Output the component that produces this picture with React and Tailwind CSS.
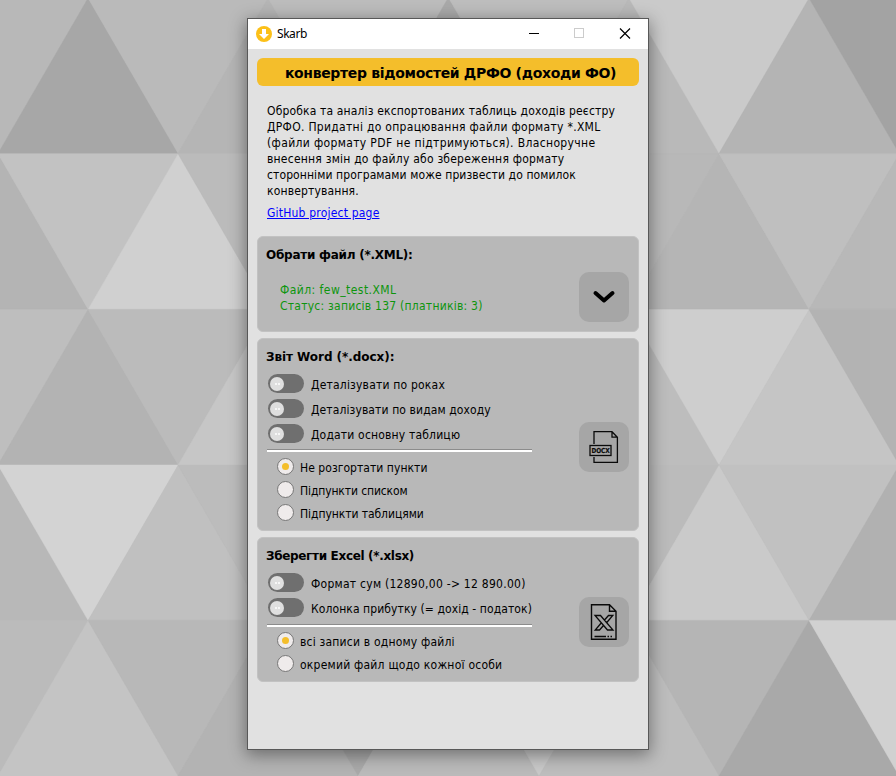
import React from "react";

const H = 155.6;
const UP = (x, y, c) => ({ p: `${x},${y + H} ${x + 90.2},${y} ${x + 180.4},${y + H}`, c });
const DOWN = (x, y, c) => ({ p: `${x},${y} ${x + 180.4},${y} ${x + 90.2},${y + H}`, c });

const TRIANGLES = [
  // row 1
  DOWN(-92, -2, "#b8b8b8"), UP(-2, -2, "#a7a7a7"), DOWN(88, -2, "#bababa"), UP(178, -2, "#b5b5b5"),
  DOWN(268, -2, "#bcbcbc"), UP(358, -2, "#a9a9a9"), DOWN(449, -2, "#bdbdbd"), UP(539, -2, "#b9b9b9"),
  DOWN(629, -2, "#cacaca"), UP(719, -2, "#b4b4b4"), DOWN(809, -2, "#a3a3a3"),
  // row 2
  UP(-92, 153.8, "#b4b4b4"), DOWN(-2, 153.8, "#c2c2c2"), UP(88, 153.8, "#d0d0d0"), DOWN(178, 153.8, "#bbbbbb"),
  DOWN(539, 153.8, "#b8b8b8"), UP(629, 153.8, "#b5b5b5"), DOWN(719, 153.8, "#bfbfbf"), UP(809, 153.8, "#b8b8b8"),
  // row 3
  DOWN(-92, 309.4, "#bebebe"), UP(-2, 309.4, "#b3b3b3"), DOWN(88, 309.4, "#bbbbbb"), UP(178, 309.4, "#c6c6c6"),
  UP(539, 309.4, "#bdbdbd"), DOWN(629, 309.4, "#cecece"), UP(719, 309.4, "#c5c5c5"), DOWN(809, 309.4, "#b3b3b3"),
  // row 4
  UP(-92, 465, "#b8b8b8"), DOWN(-2, 465, "#d3d3d3"), UP(88, 465, "#c0c0c0"), DOWN(178, 465, "#bcbcbc"),
  DOWN(539, 465, "#bbbbbb"), UP(629, 465, "#cacaca"), DOWN(719, 465, "#c1c1c1"), UP(809, 465, "#b1b1b1"),
  // row 5
  DOWN(-92, 620.4, "#bbbbbb"), UP(-2, 620.4, "#c4c4c4"), DOWN(88, 620.4, "#b8b8b8"), UP(178, 620.4, "#b3b3b3"),
  DOWN(268, 620.4, "#a9a9a9"), UP(358, 620.4, "#bababa"), DOWN(449, 620.4, "#c8c8c8"), UP(539, 620.4, "#bdbdbd"),
  DOWN(629, 620.4, "#b5b5b5"), UP(719, 620.4, "#a9a9a9"), DOWN(809, 620.4, "#d1d1d1"),
];

function Wallpaper() {
  return (
    <svg className="absolute inset-0 h-full w-full" viewBox="0 0 896 776" preserveAspectRatio="none">
      <rect width="896" height="776" fill="#b9b9b9" />
      {TRIANGLES.map((t, i) => (
        <polygon key={i} points={t.p} fill={t.c} stroke={t.c} strokeWidth="0.4" />
      ))}
    </svg>
  );
}

function Toggle({ label, spacing }) {
  return (
    <div className="flex h-[25px] items-center">
      <span className="flex h-[19px] w-9 shrink-0 items-center rounded-full bg-[#6f6f6f] pl-[2px]">
        <span className="flex size-[14px] items-center justify-center gap-[1px] rounded-full bg-[#dfdfdf]">
          <i className="size-[2px] rounded-full bg-white" />
          <i className="size-[2px] rounded-full bg-white" />
        </span>
      </span>
      <span className={`ml-[7px] pt-[2px] leading-4 ${spacing}`}>{label}</span>
    </div>
  );
}

function Radio({ label, checked, spacing }) {
  return (
    <div className="flex h-[23px] items-center">
      <span className="flex size-[17px] shrink-0 items-center justify-center rounded-full border border-[#777] bg-[#efebeb]">
        {checked && <span className="size-[7px] rounded-full bg-[#f4be2b]" />}
      </span>
      <span className={`ml-[6px] pt-[2px] leading-4 ${spacing}`}>{label}</span>
    </div>
  );
}

function Rule() {
  return <div className="h-[3px] w-[265px] border-t border-[#8c8c8c] bg-white" />;
}

function Heading({ spacing, children }) {
  return (
    <h2 className={`mt-[10px] font-bold leading-4 [font-family:'DejaVu_Sans',sans-serif] [font-stretch:normal] ${spacing}`}>{children}</h2>
  );
}

function IconButton({ children }) {
  return <button className="flex size-[50px] shrink-0 items-center justify-center rounded-[10px] bg-[#a6a6a6]">{children}</button>;
}

const DESCRIPTION = [
  ["Обробка та аналіз експортованих таблиць доходів реєстру", "tracking-[0.15px]"],
  ["ДРФО. Придатні до опрацювання файли формату *.XML", "tracking-[0.3px]"],
  ["(файли формату PDF не підтримуються). Власноручне", "tracking-[0.36px]"],
  ["внесення змін до файлу або збереження формату", "tracking-[0.22px]"],
  ["сторонніми програмами може призвести до помилок", "tracking-[0.1px]"],
  ["конвертування.", "tracking-[0.15px]"],
];

export default function App() {
  return (
    <main className="relative flex h-[776px] w-[896px] items-start justify-center overflow-hidden pt-[18px] text-xs text-black [font-family:'DejaVu_Sans_Condensed','DejaVu_Sans',sans-serif] [font-stretch:condensed]">
      <Wallpaper />
      <section className="relative flex h-[732px] w-[402px] flex-col whitespace-nowrap border border-[#585858] bg-[#e1e1e1] shadow-[0_4px_16px_1px_rgba(0,0,0,0.4)]">
        <header className="flex h-[30px] shrink-0 items-center bg-white pl-2">
          <svg className="size-4" viewBox="0 0 16 16">
            <circle cx="8" cy="8" r="8" fill="#fcc018" />
            <path d="M6 3h4v5h3l-5 5-5-5h3z" fill="#fff" />
          </svg>
          <span className="ml-[5px] text-xs tracking-[-0.45px] [font-family:'Noto_Sans','Open_Sans',sans-serif]">Skarb</span>
          <svg className="ml-auto h-[30px] w-[138px]" viewBox="0 0 138 30" fill="none" shapeRendering="crispEdges">
            <path d="M19 14.5h10" stroke="#000" />
            <path d="M64.500 9.500h9v9h-9z" stroke="#ccc" />
            <path d="M110 9.500l10 10M120 9.500l-10 10" stroke="#000" strokeWidth="1.200" shapeRendering="auto" />
          </svg>
        </header>

        <div className="flex flex-col px-[9px] pt-[9px]">
          <h1 className="flex h-7 items-center justify-center rounded-[6px] bg-[#f4be2b] pt-[2px] pl-[5px] text-sm font-bold tracking-[-0.33px] [font-family:'DejaVu_Sans',sans-serif] [font-stretch:normal]">конвертер відомостей ДРФО (доходи ФО)</h1>

          <div className="mt-[17px] flex flex-col items-start pl-[10px] leading-4">
            {DESCRIPTION.map(([line, spacing]) => (
              <span key={line} className={spacing}>{line}</span>
            ))}
            <a className="mt-[6px] tracking-[0.2px] text-[#0000ff] underline">GitHub project page</a>
          </div>

          <section className="mt-[15px] flex h-[96px] justify-between rounded-[6px] border border-[#c2c2c2] bg-[#b8b8b8] pr-[9px] pl-2">
            <div>
              <Heading spacing="tracking-[-0.25px]">Обрати файл (*.XML):</Heading>
              <div className="mt-[19px] flex flex-col items-start pl-[14px] leading-4 text-[#0d950d]">
                <span className="tracking-[0.45px]">Файл: few_test.XML</span>
                <span className="tracking-[0.24px]">Статус: записів 137 (платників: 3)</span>
              </div>
            </div>
            <div className="pt-[35px]">
              <IconButton>
                <svg className="size-6" viewBox="0 0 24 24" fill="none" stroke="#000" strokeWidth="4" strokeLinecap="round" strokeLinejoin="round">
                  <path d="M3.500 8L12 15.500l8.500-7.500" />
                </svg>
              </IconButton>
            </div>
          </section>

          <section className="mt-[6px] flex h-[193px] justify-between rounded-[6px] border border-[#c2c2c2] bg-[#b8b8b8] pr-[9px] pl-2">
            <div>
              <Heading spacing="tracking-[-0.05px]">Звіт Word (*.docx):</Heading>
              <div className="mt-[6px] pl-[2px]">
                <Toggle label="Деталізувати по роках" spacing="tracking-[0.2px]" />
                <Toggle label="Деталізувати по видам доходу" spacing="tracking-[0.11px]" />
                <Toggle label="Додати основну таблицю" spacing="tracking-[0.18px]" />
              </div>
              <div className="mt-[3px] ml-[1px]"><Rule /></div>
              <div className="mt-[3px] pl-[11px]">
                <Radio checked label="Не розгортати пункти" spacing="tracking-[0.05px]" />
                <Radio label="Підпункти списком" spacing="tracking-[-0.12px]" />
                <Radio label="Підпункти таблицями" spacing="tracking-[-0.06px]" />
              </div>
            </div>
            <div className="pt-[83px]">
              <IconButton>
                <svg className="h-8 w-[30px]" viewBox="0 0 30 32" fill="none" stroke="#0a0a0a" strokeWidth="1.300">
                  <path d="M5 13V.7h18l5.400 5.500v25.100H5V26M23 .7v5.500h5.400" />
                  <rect x="1" y="14.500" width="21" height="10" />
                  <text x="2.400" y="22" textLength="18.400" lengthAdjust="spacingAndGlyphs" className="[font-family:'DejaVu_Sans',sans-serif] [font-stretch:normal]" fill="#0a0a0a" stroke="#0a0a0a" strokeWidth="0.200" fontSize="6.800" fontWeight="bold">DOCX</text>
                </svg>
              </IconButton>
            </div>
          </section>

          <section className="mt-[6px] flex h-[145px] justify-between rounded-[6px] border border-[#c2c2c2] bg-[#b8b8b8] pr-[9px] pl-2">
            <div>
              <Heading spacing="tracking-[-0.33px]">Зберегти Excel (*.xlsx)</Heading>
              <div className="mt-[6px] pl-[2px]">
                <Toggle label="Формат сум (12890,00 -&gt; 12 890.00)" spacing="tracking-[0.26px]" />
                <Toggle label="Колонка прибутку (= дохід - податок)" spacing="tracking-[0.09px]" />
              </div>
              <div className="mt-1 ml-[1px]"><Rule /></div>
              <div className="mt-[2px] pl-[11px]">
                <Radio checked label="всі записи в одному файлі" spacing="tracking-[0.2px]" />
                <Radio label="окремий файл щодо кожної особи" spacing="tracking-[0.23px]" />
              </div>
            </div>
            <div className="pt-[59px]">
              <IconButton>
                <svg className="h-9 w-7" viewBox="0 0 28 36" fill="none" stroke="#0a0a0a" strokeWidth="1.400">
                  <path d="M1.500.7h18l6.500 6.500v28H1.500zM19.500.7v6.500H26" />
                  <path d="M5 11.500h5.500L23 26h-5.500zM14.500 16l4-4.500h4.300l-6 7M13.500 21.500l-4 4.500H5.200l6-7" strokeWidth="1.300" />
                  <path d="M4.500 32.500H16M17.500 32.500h1.500M20.500 32.500h1.500" />
                </svg>
              </IconButton>
            </div>
          </section>
        </div>
      </section>
    </main>
  );
}
